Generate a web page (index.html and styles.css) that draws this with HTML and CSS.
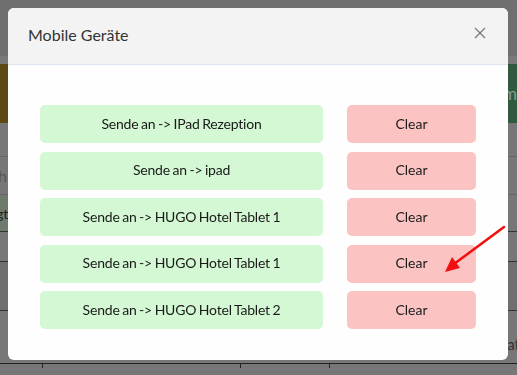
FILE: index.html
```html
<!DOCTYPE html>
<html lang="de">
<head>
<meta charset="utf-8">
<title>Mobile Geräte</title>
<link rel="stylesheet" href="styles.css">
</head>
<body>
<div class="page">
  <div class="nav"><div class="nav-low"></div></div>
  <div class="band"><div class="band-left"></div><div class="band-mid"></div><div class="band-right">m</div></div>
  <div class="row r1"></div>
  <div class="row r2"><span class="cell-text">h</span></div>
  <div class="row r3"><span class="tag">gt</span></div>
  <div class="row r4"></div>
  <div class="row r5"></div>
  <div class="row r6"><span class="end-text">at</span></div>
  <div class="row r7"><span class="tick t1"></span><span class="tick t2"></span><span class="tick t3"></span></div>
</div>

<div class="backdrop">
  <div class="modal">
    <div class="modal-header">
      <h2 class="modal-title">Mobile Geräte</h2>
      <button class="close" aria-label="Schließen">
        <svg width="12" height="12" viewBox="0 0 12 12"><path d="M1 1 L11 11 M11 1 L1 11" stroke="#7a7a7a" stroke-width="1.3" fill="none"/></svg>
      </button>
    </div>
    <div class="modal-body">
      <button class="btn send">Sende an -&gt; IPad Rezeption</button><button class="btn clear">Clear</button>
      <button class="btn send">Sende an -&gt; ipad</button><button class="btn clear">Clear</button>
      <button class="btn send">Sende an -&gt; HUGO Hotel Tablet 1</button><button class="btn clear">Clear</button>
      <button class="btn send">Sende an -&gt; HUGO Hotel Tablet 1</button><button class="btn clear">Clear</button>
      <button class="btn send">Sende an -&gt; HUGO Hotel Tablet 2</button><button class="btn clear">Clear</button>
    </div>
  </div>
  <svg class="arrow" width="70" height="56" viewBox="0 0 70 56">
    <line x1="64" y1="3" x2="14" y2="40" stroke="#f01010" stroke-width="2.6" stroke-linecap="round"/>
    <polygon points="5,48 12,33 20,44" fill="#f01010"/>
  </svg>
</div>
</body>
</html>
```

FILE: styles.css
```css
html, body {
  margin: 0;
  padding: 0;
}
body {
  width: 517px;
  height: 375px;
  overflow: hidden;
  background: #787878;
  font-family: Lato, "Open Sans", sans-serif;
}
.page {
  display: flex;
  flex-direction: column;
}
.nav {
  height: 64px;
  background: #6f6f6f;
  display: flex;
  flex-direction: column;
  justify-content: flex-end;
}
.nav-low {
  height: 8px;
  background: #797979;
}
.band {
  height: 59px;
  display: flex;
}
.band-left {
  width: 180px;
  background: #5c4914;
}
.band-mid {
  flex: 1;
  background: #6a6a6a;
}
.band-right {
  width: 160px;
  background: #2f5a3f;
  color: #8d9e92;
  font-size: 17px;
  display: flex;
  align-items: center;
  justify-content: flex-end;
  overflow: hidden;
}
.row {
  background: #777777;
  border-bottom: 1px solid #4a4a4a;
  position: relative;
  display: flex;
  align-items: center;
  overflow: hidden;
}
.r1 { height: 33px; border-bottom-color: #666; }
.r2 { height: 37px; border-bottom-color: #666; }
.r3 { height: 36px; border-bottom-color: #333; }
.r4 { height: 29px; border-bottom-color: #333; }
.r5 { height: 48px; background: #6f6f6f; border-bottom-color: #333; }
.r6 { height: 52px; border-bottom-color: #222; }
.r7 { height: 11px; border-bottom: none; background: #777; }
.cell-text {
  color: #555;
  font-size: 16px;
  margin-left: -2px;
}
.tag {
  background: #6e7b6c;
  color: #222;
  font-size: 14px;
  height: 100%;
  display: flex;
  align-items: center;
  padding: 0 4px 0 0;
  margin-left: -4px;
}
.end-text {
  margin-left: auto;
  margin-right: -3px;
  margin-top: 14px;
  font-size: 15px;
  color: #333;
}
.tick {
  position: absolute;
  top: 0;
  width: 1px;
  height: 4px;
  background: #222;
}
.t1 { left: 42px; }
.t2 { left: 240px; }
.t3 { left: 329px; }

.backdrop {
  position: fixed;
  inset: 0;
}
.modal {
  position: absolute;
  left: 8px;
  top: 8px;
  width: 500px;
  height: 352px;
  background: #fefefe;
  border-radius: 6px;
  overflow: hidden;
  display: flex;
  flex-direction: column;
}
.modal-header {
  height: 56px;
  background: #f3f3f3;
  border-bottom: 1px solid #dde6f0;
  display: flex;
  align-items: center;
  justify-content: space-between;
  padding: 0 22px 0 20px;
}
.modal-title {
  margin: 0;
  font-size: 16px;
  font-weight: 400;
  color: #333;
  margin-top: -3px;
}
.close {
  border: none;
  background: none;
  padding: 0;
  width: 12px;
  height: 12px;
  display: flex;
  margin-top: -6px;
}
.modal-body {
  padding: 40px 32px 0 32px;
  display: grid;
  grid-template-columns: 283px 129px;
  column-gap: 24px;
  row-gap: 8.5px;
  grid-auto-rows: 38px;
}
.btn {
  border: none;
  border-radius: 5px;
  font-family: Lato, "Open Sans", sans-serif;
  font-size: 14px;
  color: #1a1a1a;
  padding: 0 0 2px 0;
  margin: 0;
}
.send {
  background: #d3f8d3;
  word-spacing: -0.8px;
  letter-spacing: -0.2px;
}
.clear { background: #fbc4c3; }
.arrow {
  position: absolute;
  left: 440px;
  top: 224px;
}
```
